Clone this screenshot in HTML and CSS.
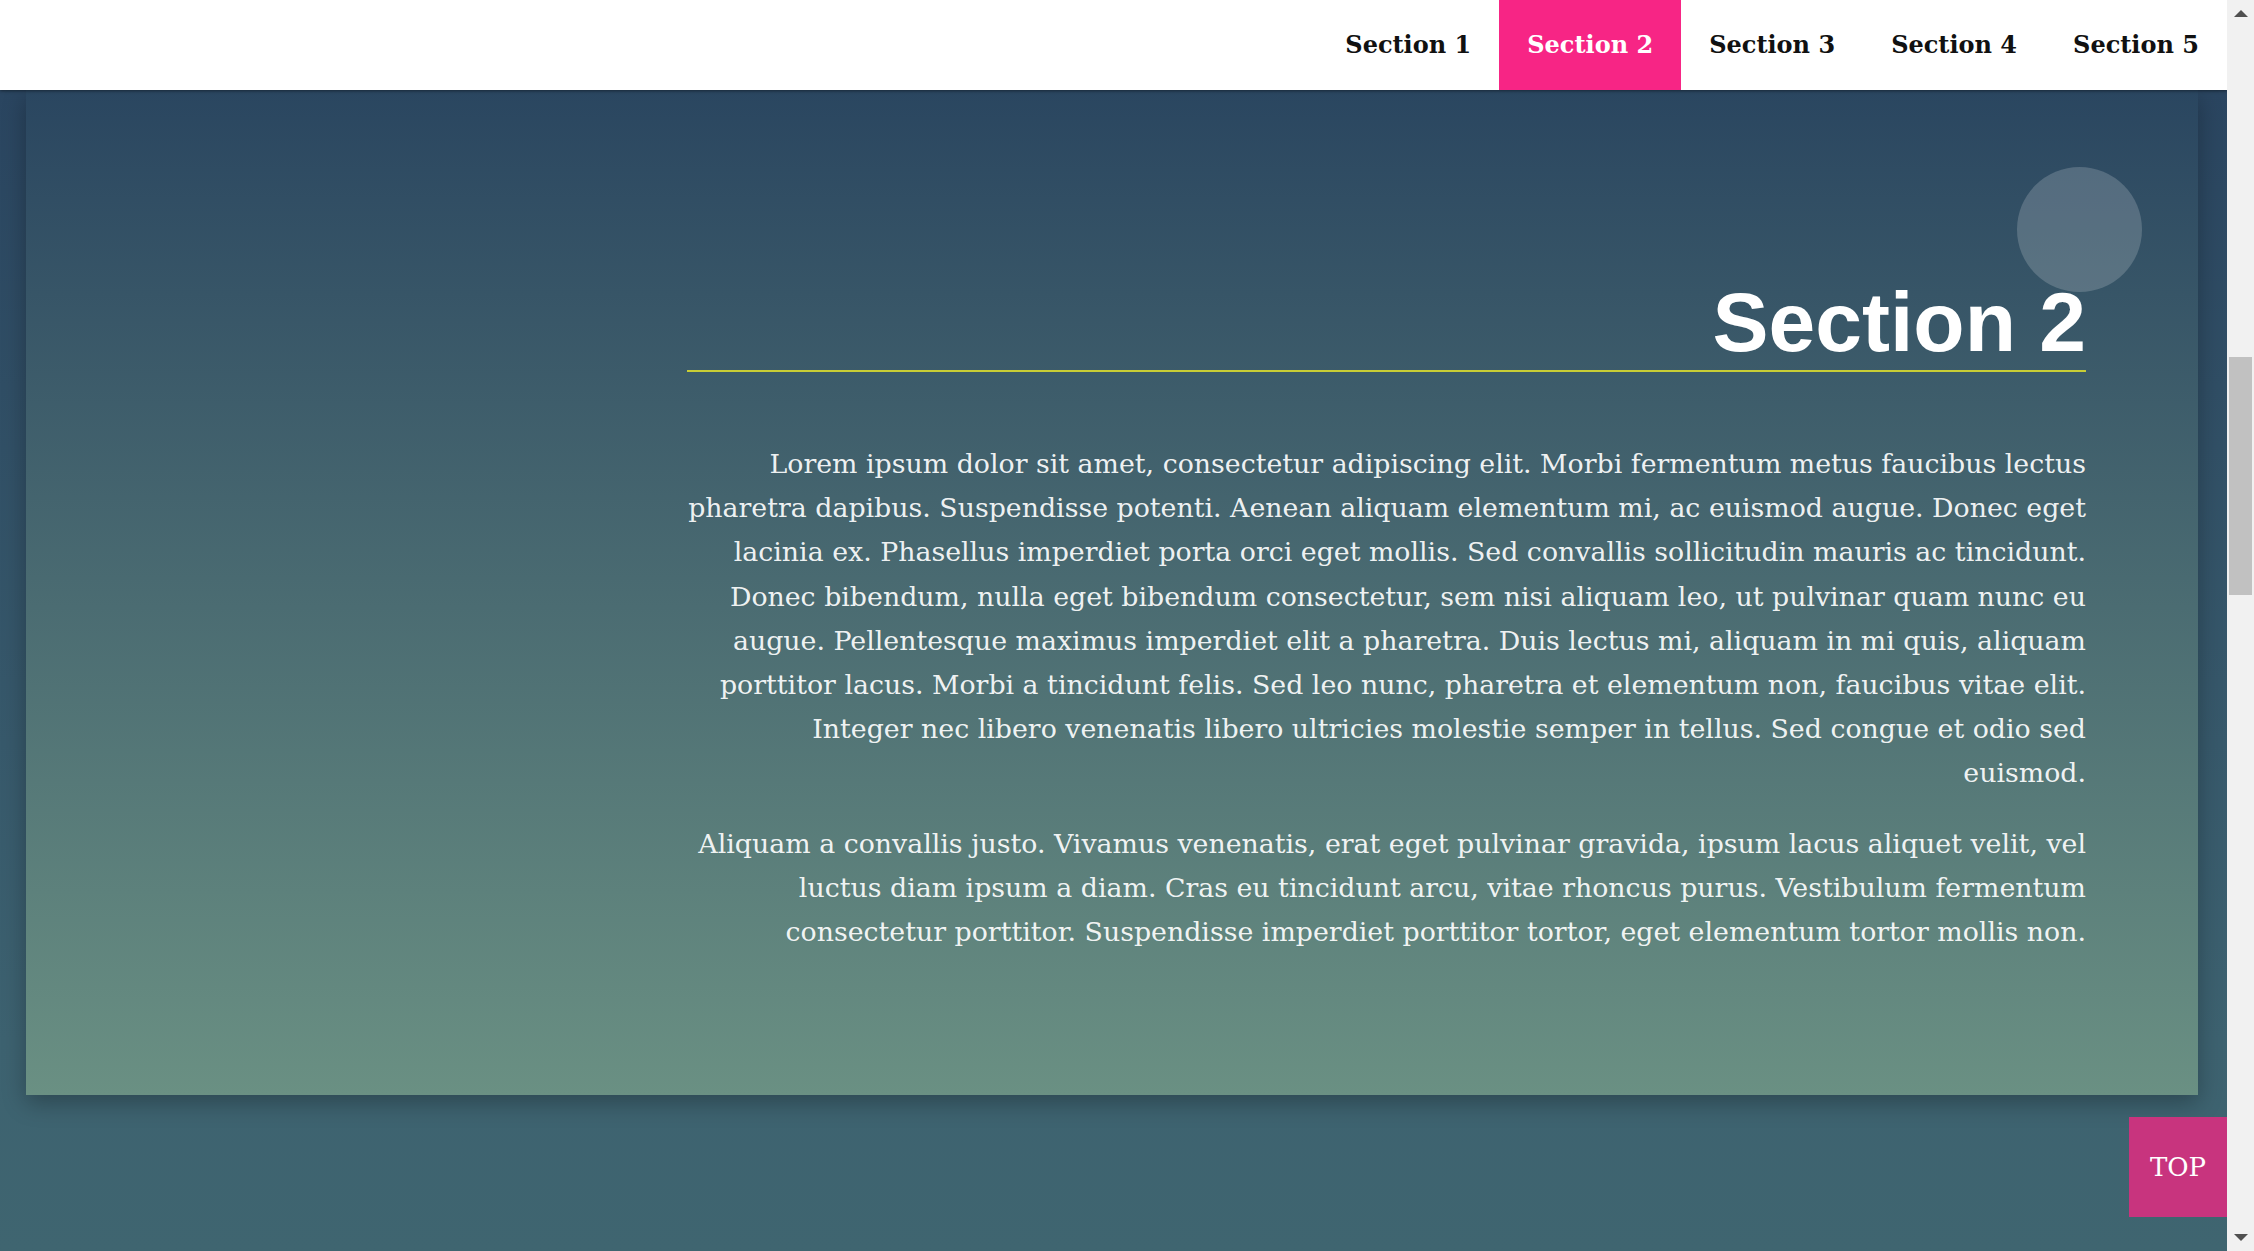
FILE: index.html
```html
<!DOCTYPE html>
<html lang="en">
<head>
<meta charset="utf-8">
<title>Section 2</title>
<link rel="stylesheet" href="styles.css">
</head>
<body>
<div class="viewport">
  <div class="page">
    <header class="nav">
      <a class="nav-item">Section 1</a>
      <a class="nav-item is-active">Section 2</a>
      <a class="nav-item">Section 3</a>
      <a class="nav-item">Section 4</a>
      <a class="nav-item">Section 5</a>
    </header>
    <main class="main">
      <section class="card">
        <span class="orb"></span>
        <div class="content">
          <h2 class="title">Section 2</h2>
          <p class="text">Lorem ipsum dolor sit amet, consectetur adipiscing elit. Morbi fermentum metus faucibus lectus<br>
pharetra dapibus. Suspendisse potenti. Aenean aliquam elementum mi, ac euismod augue. Donec eget<br>
lacinia ex. Phasellus imperdiet porta orci eget mollis. Sed convallis sollicitudin mauris ac tincidunt.<br>
Donec bibendum, nulla eget bibendum consectetur, sem nisi aliquam leo, ut pulvinar quam nunc eu<br>
augue. Pellentesque maximus imperdiet elit a pharetra. Duis lectus mi, aliquam in mi quis, aliquam<br>
porttitor lacus. Morbi a tincidunt felis. Sed leo nunc, pharetra et elementum non, faucibus vitae elit.<br>
Integer nec libero venenatis libero ultricies molestie semper in tellus. Sed congue et odio sed<br>
euismod.</p>
          <p class="text">Aliquam a convallis justo. Vivamus venenatis, erat eget pulvinar gravida, ipsum lacus aliquet velit, vel<br>
luctus diam ipsum a diam. Cras eu tincidunt arcu, vitae rhoncus purus. Vestibulum fermentum<br>
consectetur porttitor. Suspendisse imperdiet porttitor tortor, eget elementum tortor mollis non.</p>
        </div>
      </section>
    </main>
    <a class="top-btn">TOP</a>
  </div>
  <div class="scrollbar">
    <div class="sb-btn"><span class="sb-arrow sb-up"></span></div>
    <div class="sb-track"><div class="sb-thumb"></div></div>
    <div class="sb-btn"><span class="sb-arrow sb-down"></span></div>
  </div>
</div>
</body>
</html>
```
FILE: styles.css
```css
html, body {
  margin: 0;
  padding: 0;
  height: 1251px;
  overflow: hidden;
}

body {
  font-family: "DejaVu Serif", "Liberation Serif", serif;
}

.viewport {
  display: flex;
  height: 1251px;
}

.page {
  flex: 1;
  position: relative;
  overflow: hidden;
  background: linear-gradient(to bottom, #2a4560 90px, #3d6270 1040px, #3f6570 1251px);
}

.nav {
  position: relative;
  z-index: 2;
  height: 90px;
  background: #ffffff;
  display: flex;
  justify-content: flex-end;
  box-shadow: 0 1px 3px rgba(0, 0, 0, 0.45);
}

.nav-item {
  padding: 0 28px;
  line-height: 90px;
  font-size: 24px;
  font-weight: bold;
  color: #111111;
  text-decoration: none;
}

.nav-item.is-active {
  background: #f72585;
  color: #ffffff;
}

.main {
  padding: 0 29px 0 26px;
}

.card {
  position: relative;
  height: 1005px;
  box-sizing: border-box;
  padding: 185px 112px 0 0;
  display: flex;
  justify-content: flex-end;
  background: linear-gradient(to bottom, #2a4660 0%, #6a9083 100%);
  box-shadow: 0 8px 22px rgba(0, 0, 0, 0.28);
}

.orb {
  position: absolute;
  top: 77px;
  right: 56px;
  width: 125px;
  height: 125px;
  border-radius: 50%;
  background: rgba(255, 255, 255, 0.18);
}

.content {
  width: 1399px;
  position: relative;
}

.title {
  margin: 0 0 70px;
  font-family: "Liberation Sans", Arial, sans-serif;
  font-weight: bold;
  font-size: 84px;
  line-height: 95px;
  text-align: right;
  color: #ffffff;
  border-bottom: 2px solid #c8cd35;
}

.text {
  margin: 0 0 26px -80px;
  font-size: 26.8px;
  line-height: 44.2px;
  text-align: right;
  color: rgba(255, 255, 255, 0.93);
}

.top-btn {
  position: absolute;
  right: 0;
  top: 1117px;
  width: 98px;
  height: 100px;
  display: flex;
  align-items: center;
  justify-content: center;
  background: #c8347e;
  color: #ffffff;
  font-size: 26px;
  text-decoration: none;
}

.scrollbar {
  width: 27px;
  background: #f1f1f1;
  display: flex;
  flex-direction: column;
}

.sb-btn {
  height: 27px;
  display: flex;
  align-items: center;
  justify-content: center;
}

.sb-track {
  flex: 1;
}

.sb-thumb {
  margin: 330px 2px 0 2px;
  height: 238px;
  background: #c1c1c1;
}

.sb-arrow {
  width: 0;
  height: 0;
  border-left: 7px solid transparent;
  border-right: 7px solid transparent;
}

.sb-up {
  border-bottom: 7px solid #505050;
}

.sb-down {
  border-top: 7px solid #505050;
}
```
